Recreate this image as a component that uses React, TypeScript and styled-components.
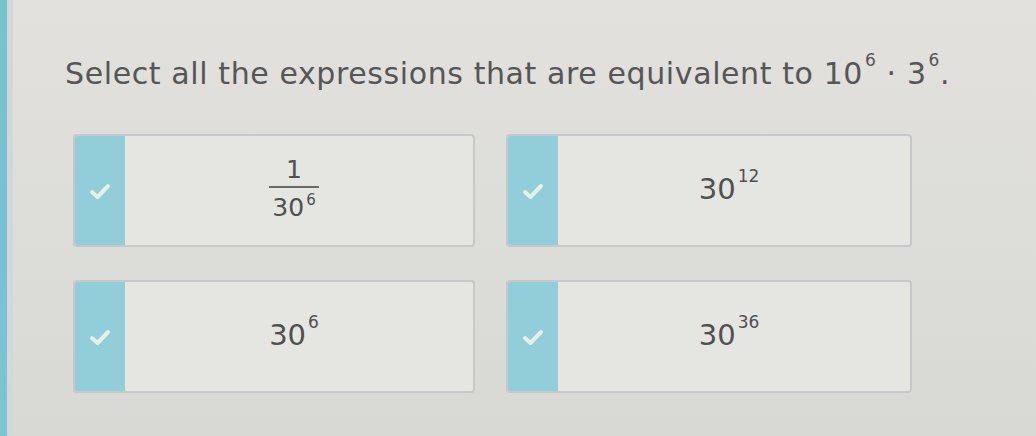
import React from "react";
import styled, { createGlobalStyle } from "styled-components";

const GlobalStyle = createGlobalStyle`
  html, body {
    margin: 0;
    padding: 0;
    background: #dcdcd8;
  }
  body {
    font-family: "DejaVu Sans", Verdana, sans-serif;
  }
`;

const Page = styled.div`
  width: 1036px;
  height: 436px;
  display: flex;
  background: linear-gradient(180deg, #e2e1de 0%, #dcdcd8 60%, #d8d8d4 100%);
  overflow: hidden;
`;

const EdgeBar = styled.div`
  width: 7px;
  flex: none;
  background: linear-gradient(180deg, #74c4cc 0%, #78c0d6 60%, #7cc6d2 100%);
  border-right: 6px solid #d4d6dc;
`;

const Content = styled.div`
  flex: 1;
  padding: 54px 0 0 52px;
`;

const Question = styled.div`
  font-size: 30px;
  color: #565656;
  letter-spacing: 0.6px;
  line-height: 40px;
  white-space: nowrap;
`;

const Sup = styled.sup<{ $size?: number; $lift?: number }>`
  font-size: ${(p) => p.$size ?? 14}px;
  vertical-align: baseline;
  position: relative;
  top: ${(p) => -(p.$lift ?? 17)}px;
  margin-left: 2px;
`;

const Grid = styled.div`
  display: grid;
  grid-template-columns: 402px 406px;
  grid-auto-rows: 113px;
  column-gap: 31px;
  row-gap: 33px;
  margin: 36px 0 0 8px;
`;

const Card = styled.div`
  display: flex;
  background: #e5e5e1;
  border: 2px solid #c6c8ca;
  border-radius: 4px;
  overflow: hidden;
`;

const CheckStrip = styled.div`
  width: 50px;
  flex: none;
  background: #92ced9;
  display: flex;
  align-items: center;
  justify-content: center;
`;

const Answer = styled.div`
  flex: 1;
  display: flex;
  align-items: center;
  justify-content: center;
  padding-right: 10px;
  color: #505050;
  font-size: 29px;
  line-height: 36px;
`;

const Fraction = styled.div`
  display: inline-flex;
  flex-direction: column;
  align-items: center;
  font-size: 25px;
  line-height: 28px;
`;

const FractionBar = styled.div`
  width: 50px;
  height: 2px;
  background: #6a6a6a;
  margin: 2px 0 6px;
`;

const Check = () => (
  <svg width="24" height="20" viewBox="0 0 24 20">
    <path
      d="M4 11 L9.5 16 L20 5"
      fill="none"
      stroke="#f3f5ee"
      strokeOpacity="0.85"
      strokeWidth="4"
      strokeLinecap="round"
      strokeLinejoin="round"
    />
  </svg>
);

type Choice = { key: string; body: React.ReactNode };

const choices: Choice[] = [
  {
    key: "a",
    body: (
      <Fraction>
        <span>1</span>
        <FractionBar />
        <span>
          30<Sup $size={15} $lift={11}>6</Sup>
        </span>
      </Fraction>
    ),
  },
  {
    key: "b",
    body: (
      <span>
        30<Sup $size={17}>12</Sup>
      </span>
    ),
  },
  {
    key: "c",
    body: (
      <span>
        30<Sup $size={17}>6</Sup>
      </span>
    ),
  },
  {
    key: "d",
    body: (
      <span>
        30<Sup $size={17}>36</Sup>
      </span>
    ),
  },
];

export default function App() {
  return (
    <>
      <GlobalStyle />
      <Page>
        <EdgeBar />
        <Content>
          <Question>
            Select all the expressions that are equivalent to 10
            <Sup $size={17} $lift={18}>6</Sup> · 3<Sup $size={17} $lift={18}>6</Sup>.
          </Question>
          <Grid>
            {choices.map((c) => (
              <Card key={c.key}>
                <CheckStrip>
                  <Check />
                </CheckStrip>
                <Answer>{c.body}</Answer>
              </Card>
            ))}
          </Grid>
        </Content>
      </Page>
    </>
  );
}
